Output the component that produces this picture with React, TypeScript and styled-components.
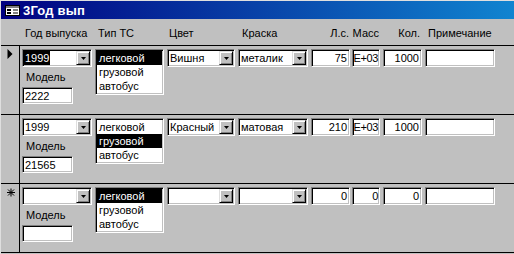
import React from "react";
import styled, { createGlobalStyle, css } from "styled-components";

const Global = createGlobalStyle`
  html, body { margin: 0; padding: 0; background: #c0c0c0; }
  body { font-family: "Liberation Sans", Arial, sans-serif; font-size: 11px; color: #000; }
  * { box-sizing: border-box; }
`;

const sunken = css`
  background: #fff;
  border: 1px solid;
  border-color: #808080 #fff #fff #808080;
  box-shadow: inset 1px 1px 0 #000, inset -1px -1px 0 #c0c0c0;
`;

const Window = styled.div`
  width: 514px;
  height: 254px;
  background: #c0c0c0;
  border-top: 1px solid #dfdfdf;
  border-left: 1px solid #dfdfdf;
  display: flex;
  flex-direction: column;
  overflow: hidden;
`;

const TitleBar = styled.div`
  height: 18px;
  flex: none;
  background: linear-gradient(to right, #000080, #1084d0);
  display: flex;
  align-items: center;
  gap: 3px;
  padding-left: 4px;
  color: #fff;
  font-weight: bold;
  font-size: 13px;
  letter-spacing: 0.2px;
`;

const Header = styled.div`
  height: 26px;
  flex: none;
  display: flex;
  align-items: flex-start;
  padding: 8px 0 0 21px;
  line-height: 13px;
  white-space: nowrap;
`;

const HeadCell = styled.div<{ $w: number; $ml: number; $right?: boolean; $pad: number }>`
  width: ${(p) => p.$w}px;
  margin-left: ${(p) => p.$ml}px;
  display: flex;
  justify-content: ${(p) => (p.$right ? "flex-end" : "flex-start")};
  padding-left: ${(p) => (p.$right ? 0 : p.$pad)}px;
  padding-right: ${(p) => (p.$right ? p.$pad : 0)}px;
`;

const Records = styled.div`
  display: flex;
  flex-direction: column;
  border-bottom: 1px solid #000;
`;

const Record = styled.div`
  height: 69px;
  border-top: 1px solid #000;
  display: flex;
`;

const Selector = styled.div`
  width: 19px;
  flex: none;
  border-right: 1px solid #000;
  padding: 3px 0 0 6px;
`;

const Body = styled.div`
  display: flex;
  align-items: flex-start;
  padding: 3px 0 0 2px;
`;

const Column = styled.div`
  display: flex;
  flex-direction: column;
  width: 70px;
`;

const Combo = styled.div<{ $w: number; $ml?: number }>`
  ${sunken};
  width: ${(p) => p.$w}px;
  height: 18px;
  margin-left: ${(p) => p.$ml ?? 0}px;
  padding: 1px;
  display: flex;
`;

const ComboValue = styled.div`
  flex: 1;
  overflow: hidden;
  display: flex;
  align-items: flex-start;
  white-space: nowrap;
`;

const Text = styled.span<{ $hl?: boolean }>`
  line-height: 14px;
  padding: 0 1px;
  background: ${(p) => (p.$hl ? "#000" : "transparent")};
  color: ${(p) => (p.$hl ? "#fff" : "#000")};
`;

const DropButton = styled.div`
  width: 14px;
  height: 14px;
  flex: none;
  background: #c0c0c0;
  border: 1px solid;
  border-color: #dfdfdf #000 #000 #dfdfdf;
  box-shadow: inset 1px 1px 0 #fff, inset -1px -1px 0 #808080;
  display: flex;
  align-items: center;
  justify-content: center;
`;

const Label = styled.div`
  line-height: 13px;
  margin: 4px 0 3px 4px;
`;

const Field = styled.div<{ $w: number; $ml?: number; $right?: boolean; $tight?: boolean }>`
  ${sunken};
  width: ${(p) => p.$w}px;
  height: 18px;
  margin-left: ${(p) => p.$ml ?? 0}px;
  padding: ${(p) => (p.$tight ? "1px 1px" : "1px 2px")};
  display: flex;
  justify-content: ${(p) => (p.$right ? "flex-end" : "flex-start")};
  overflow: hidden;
  white-space: nowrap;
  line-height: 14px;
  letter-spacing: ${(p) => (p.$tight ? "-0.4px" : "0")};
`;

const ModelField = styled(Field)`
  height: 17px;
`;

const ListBox = styled.div`
  ${sunken};
  width: 69px;
  height: 46px;
  margin-left: 3px;
  padding: 1px;
  display: flex;
  flex-direction: column;
`;

const ListItem = styled.div<{ $sel?: boolean }>`
  height: 14px;
  line-height: 14px;
  padding-left: 2px;
  background: ${(p) => (p.$sel ? "#000" : "transparent")};
  color: ${(p) => (p.$sel ? "#fff" : "#000")};
`;

const Arrow = () => (
  <svg width="5" height="3" viewBox="0 0 5 3">
    <path d="M0 0H5L2.5 3Z" fill="#000" />
  </svg>
);

const CurrentMark = () => (
  <svg width="6" height="10" viewBox="0 0 6 10">
    <path d="M0.5 0L5.5 5L0.5 10Z" fill="#000" />
  </svg>
);

const NewMark = () => (
  <svg width="8" height="9" viewBox="0 0 8 9">
    <g stroke="#000" strokeWidth="1">
      <line x1="4" y1="0.5" x2="4" y2="8.5" />
      <line x1="0" y1="4.5" x2="8" y2="4.5" />
      <line x1="1" y1="1.5" x2="7" y2="7.5" />
      <line x1="7" y1="1.5" x2="1" y2="7.5" />
    </g>
  </svg>
);

const FormIcon = () => (
  <svg width="15" height="11" viewBox="0 0 15 11">
    <rect x="0.5" y="0.5" width="14" height="10" fill="#fff" stroke="#000" />
    <rect x="1" y="1" width="13" height="2" fill="#808080" />
    <rect x="2" y="4" width="4" height="2" fill="#000" />
    <rect x="8" y="4" width="5" height="2" fill="#808080" />
    <rect x="2" y="7" width="4" height="2" fill="#000" />
    <rect x="8" y="7" width="5" height="2" fill="#808080" />
  </svg>
);

type Rec = {
  mark: "current" | "new" | "none";
  year: string;
  yearHl?: boolean;
  model: string;
  type: number;
  color: string;
  paint: string;
  hp: string;
  mass: string;
  count: string;
};

const records: Rec[] = [
  { mark: "current", year: "1999", yearHl: true, model: "2222", type: 0, color: "Вишня", paint: "металик", hp: "75", mass: "E+03", count: "1000" },
  { mark: "none", year: "1999", model: "21565", type: 1, color: "Красный", paint: "матовая", hp: "210", mass: "E+03", count: "1000" },
  { mark: "new", year: "", model: "", type: 0, color: "", paint: "", hp: "0", mass: "0", count: "0" },
];

const types = ["легковой", "грузовой", "автобус"];

const ComboBox = ({ w, ml, value, hl }: { w: number; ml?: number; value: string; hl?: boolean }) => (
  <Combo $w={w} $ml={ml}>
    <ComboValue>{value && <Text $hl={hl}>{value}</Text>}</ComboValue>
    <DropButton>
      <Arrow />
    </DropButton>
  </Combo>
);

export default function App() {
  return (
    <>
      <Global />
      <Window>
        <TitleBar>
          <FormIcon />
          <span>3Год вып</span>
        </TitleBar>
        <Header>
          <HeadCell $w={70} $ml={0} $pad={3}>Год выпуска</HeadCell>
          <HeadCell $w={69} $ml={3} $pad={3}>Тип ТС</HeadCell>
          <HeadCell $w={68} $ml={3} $pad={2}>Цвет</HeadCell>
          <HeadCell $w={70} $ml={3} $pad={4}>Краска</HeadCell>
          <HeadCell $w={39} $ml={3} $pad={1} $right>Л.с.</HeadCell>
          <HeadCell $w={28} $ml={2} $pad={1} $right>Масс</HeadCell>
          <HeadCell $w={39} $ml={3} $pad={2} $right>Кол.</HeadCell>
          <HeadCell $w={70} $ml={3} $pad={3}>Примечание</HeadCell>
        </Header>
        <Records>
          {records.map((r, i) => (
            <Record key={i}>
              <Selector>
                {r.mark === "current" && <CurrentMark />}
                {r.mark === "new" && <NewMark />}
              </Selector>
              <Body>
                <Column>
                  <ComboBox w={70} value={r.year} hl={r.yearHl} />
                  <Label>Модель</Label>
                  <ModelField $w={51}>{r.model}</ModelField>
                </Column>
                <ListBox>
                  {types.map((t, j) => (
                    <ListItem key={t} $sel={j === r.type}>
                      {t}
                    </ListItem>
                  ))}
                </ListBox>
                <ComboBox w={68} ml={3} value={r.color} />
                <ComboBox w={70} ml={3} value={r.paint} />
                <Field $w={39} $ml={3} $right>{r.hp}</Field>
                <Field $w={28} $ml={2} $right $tight>{r.mass}</Field>
                <Field $w={39} $ml={3} $right>{r.count}</Field>
                <Field $w={70} $ml={3} />
              </Body>
            </Record>
          ))}
        </Records>
      </Window>
    </>
  );
}
